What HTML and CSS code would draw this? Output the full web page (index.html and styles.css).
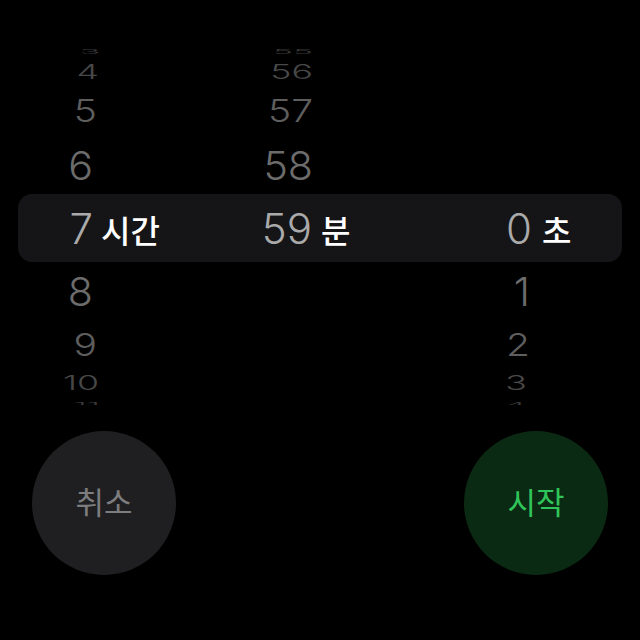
FILE: index.html
```html
<!DOCTYPE html>
<html lang="ko">
<head>
<meta charset="utf-8">
<title>타이머</title>
<link rel="stylesheet" href="styles.css">
</head>
<body>
<div class="screen">
  <div class="picker">
    <div class="bar"></div>
    <div class="columns">
      <div class="col hours">
        <div class="wheel">
          <div class="item u4">3</div>
          <div class="item u3">4</div>
          <div class="item u2">5</div>
          <div class="item u1">6</div>
          <div class="item c">7</div>
          <div class="item d1">8</div>
          <div class="item d2">9</div>
          <div class="item d3">10</div>
          <div class="item d4">11</div>
        </div>
        <div class="label">시간</div>
      </div>
      <div class="col minutes">
        <div class="wheel">
          <div class="item u4">55</div>
          <div class="item u3">56</div>
          <div class="item u2">57</div>
          <div class="item u1">58</div>
          <div class="item c">59</div>
        </div>
        <div class="label">분</div>
      </div>
      <div class="col seconds">
        <div class="wheel">
          <div class="item c">0</div>
          <div class="item d1">1</div>
          <div class="item d2">2</div>
          <div class="item d3">3</div>
          <div class="item d4">4</div>
        </div>
        <div class="label">초</div>
      </div>
    </div>
  </div>
  <div class="buttons">
    <button class="round cancel">취소</button>
    <button class="round start">시작</button>
  </div>
</div>
</body>
</html>
```
FILE: styles.css
```css
html, body {
  margin: 0;
  padding: 0;
  background: #000;
}
.screen {
  width: 640px;
  height: 640px;
  background: #000;
  overflow: hidden;
}
.picker {
  margin-top: 48px;
  width: 640px;
  height: 357px;
  display: grid;
  grid-template-columns: 640px;
  overflow: hidden;
}
.bar {
  grid-area: 1 / 1;
  align-self: start;
  margin: 146px 18px 0 18px;
  height: 68px;
  border-radius: 14px;
  background: #151517;
}
.columns {
  grid-area: 1 / 1;
  display: flex;
  width: 640px;
}
.col {
  width: 220px;
  flex: none;
  display: flex;
}
.col.seconds {
  width: 200px;
}
.wheel {
  width: 93px;
  flex: none;
  display: grid;
  height: 357px;
}
.minutes .wheel, .seconds .wheel {
  width: 92px;
}
.item {
  grid-area: 1 / 1;
  align-self: start;
  margin-top: 156px;
  height: 50px;
  line-height: 50px;
  text-align: right;
  font-family: "Inter", "Liberation Sans", sans-serif;
  font-weight: 300;
  font-size: 42px;
  color: #5f5f5f;
  transform-origin: right center;
  transform: translate(var(--x, 0px), var(--y, 0px)) scale(var(--sx, 1), var(--sy, 1));
}
.c { color: #aaaaaa; }
.u1 { --y: -63px; --sx: .98; --sy: .95; color: #6c6c6c; }
.d1 { --y: 63px; --sx: .98; --sy: .95; color: #6c6c6c; }
.u2 { --y: -118px; --sx: .93; --sy: .75; color: #5e5e5e; }
.d2 { --y: 116px; --sx: .93; --sy: .75; color: #5e5e5e; }
.u3 { --y: -157px; --sx: .85; --sy: .48; color: #484848; }
.d3 { --y: 154px; --sx: .85; --sy: .48; color: #484848; }
.u4 { --y: -177px; --sx: .8; --sy: .16; color: #3a3a3a; }
.d4 { --y: 176px; --sx: .8; --sy: .16; color: #3a3a3a; }

.hours .u2, .hours .d2 { --x: 4px; }
.hours .u3, .hours .d3 { --x: 6px; }
.hours .u4, .hours .d4 { --x: 7px; }
.minutes .u1, .minutes .u2, .minutes .u3, .minutes .u4 { --x: 1px; }
.seconds .d1, .seconds .d2 { --x: -2px; }
.seconds .d3 { --x: -5px; }
.seconds .d4 { --x: -6px; }

.label {
  margin-top: 156px;
  height: 50px;
  line-height: 50px;
  margin-left: 8px;
  font-family: "Noto Sans CJK KR", "Noto Sans", sans-serif;
  font-weight: 500;
  font-size: 32px;
  color: #ffffff;
}
.minutes .label { margin-left: 9px; }
.seconds .label { margin-left: 10px; }

.buttons {
  margin-top: 26px;
  padding: 0 32px;
  display: flex;
  justify-content: space-between;
}
.round {
  width: 144px;
  height: 144px;
  border-radius: 50%;
  border: none;
  padding: 0 0 6px 0;
  font-family: "Noto Sans CJK KR", "Noto Sans", sans-serif;
  font-size: 31px;
  font-weight: 400;
}
.cancel {
  background: #1f1f21;
  color: #7d7d7f;
}
.start {
  background: #0b2a13;
  color: #30c55a;
}
```
